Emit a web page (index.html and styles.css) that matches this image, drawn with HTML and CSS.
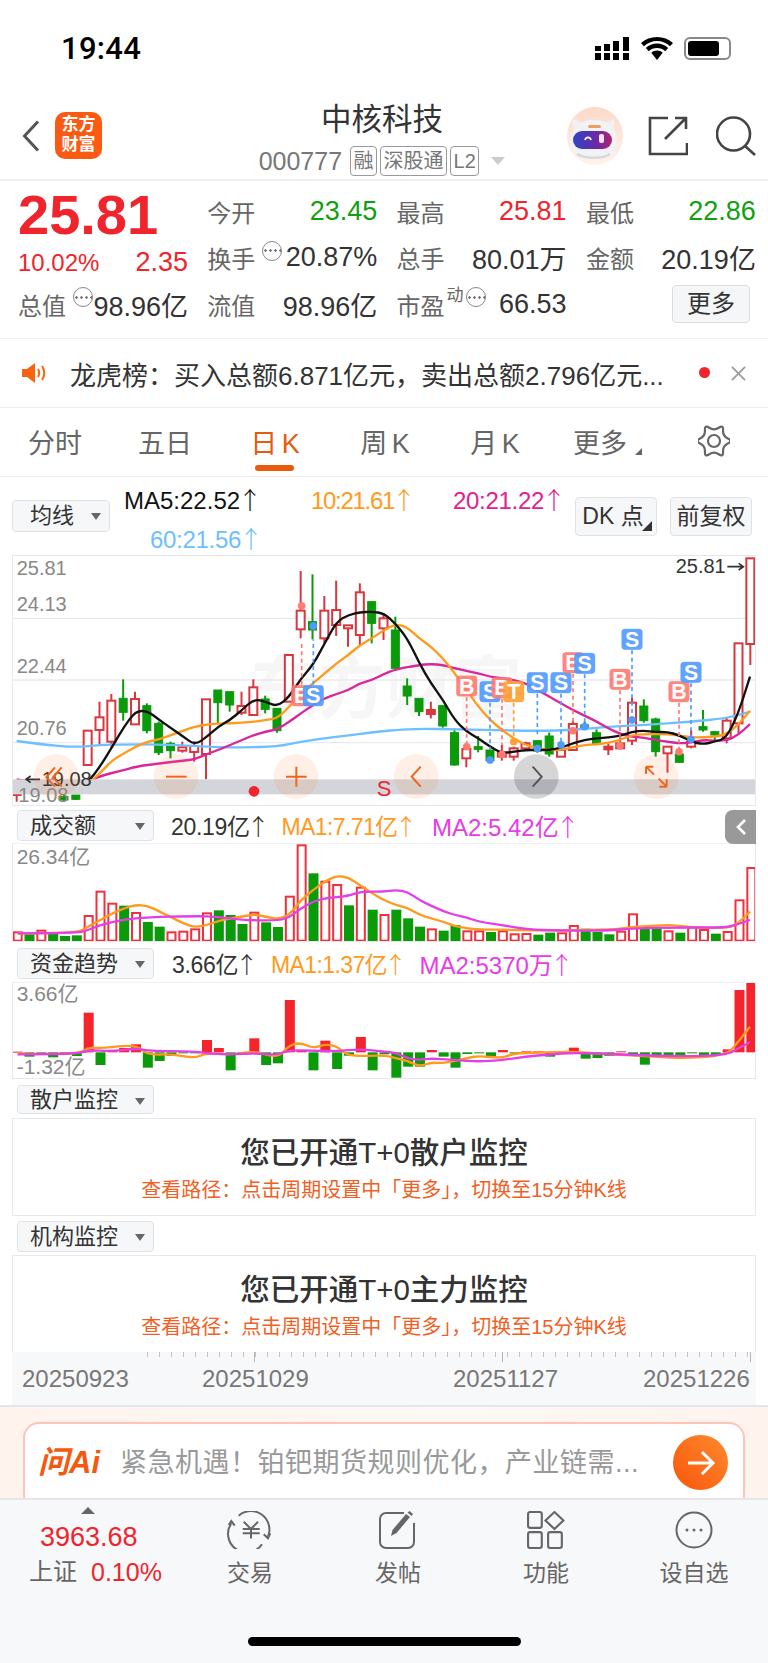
FILE: index.html
```html
<!DOCTYPE html>
<html lang="zh-CN">
<head>
    <meta charset="UTF-8">
    <meta name="viewport" content="width=device-width, initial-scale=1.0">
    <title>中核科技</title>
    <link rel="stylesheet" href="styles.css">
</head>
<body>
<div class="status">
    <span class="time">19:44</span>
    <div class="status-icons">
        <svg class="ic-signal" viewBox="0 0 35 23">
            <path d="M0 9h6v5H0zM0 16h6v7H0zM9 7h6v7H9zM9 16h6v7H9zM18 4h6v10h-6zM18 16h6v7h-6zM28 0h6v14h-6zM28 16h6v7h-6z"/>
        </svg>
        <svg class="ic-wifi" viewBox="0 0 32 23">
            <path d="M16 4c5 0 9.600 2 13 5.200L32 6C27.800 2.200 22.200 0 16 0S4.200 2.200 0 6l3 3.200C6.400 6 11 4 16 4z"/>
            <path d="M16 11c3.200 0 6 1.200 8.200 3.200l3-3.300C24.200 8.200 20.300 6.500 16 6.500S7.800 8.200 4.800 10.900l3 3.300C10 12.200 12.800 11 16 11z"/>
            <path d="M16 13.500c-2.200 0-4.200.8-5.700 2.200L16 23l5.700-7.300c-1.500-1.400-3.500-2.200-5.700-2.200z"/>
        </svg>
        <div class="battery"><i></i></div>
    </div>
</div>

<header class="nav">
    <div class="nav-left">
        <svg class="ic-back" viewBox="0 0 18 32"><path d="M16 1.500L2.500 16 16 30.500"/></svg>
        <div class="logo">东方<br>财富</div>
    </div>
    <div class="nav-mid">
        <div class="stock-name">中核科技</div>
        <div class="stock-sub">
            <span class="code">000777</span>
            <span class="tag">融</span><span class="tag">深股通</span><span class="tag">L2</span>
            <i class="tri-down"></i>
        </div>
    </div>
    <div class="nav-right">
        <svg class="ic-robot" viewBox="0 0 56 58">
            <defs>
                <linearGradient id="visor" x1="0" y1="0" x2="1" y2="0">
                    <stop offset="0" stop-color="#2f45c4"/><stop offset=".6" stop-color="#6a2aa8"/><stop offset="1" stop-color="#b0246e"/>
                </linearGradient>
                <linearGradient id="halo" x1="0" y1="0" x2="0" y2="1">
                    <stop offset="0" stop-color="#fcd9c8"/><stop offset="1" stop-color="#fff3ec"/>
                </linearGradient>
            </defs>
            <ellipse cx="28" cy="29" rx="28" ry="29" fill="url(#halo)"/>
            <path d="M5 14c0 4 1 6 3 8l6-6-6-4zM47 12c1 4 0 7-2 9l-5-6z" fill="#f1f1f3"/>
            <path d="M4 34C4 20 13 13 27 13s23 7 23 21c0 12-9 17-23 17S4 46 4 34z" fill="#f1f2f5"/>
            <rect x="21" y="18" width="13" height="3" rx="1.500" fill="#ee9f5e"/>
            <rect x="6" y="24" width="39" height="18" rx="9" fill="url(#visor)"/>
            <path d="M18 33c1-3.500 5-3.500 6 0" fill="none" stroke="#fff" stroke-width="1.600"/>
            <rect x="32" y="27" width="5" height="9" rx="2" fill="#fbe4f2"/>
            <path d="M10 47c8 5 26 5 33 0" fill="none" stroke="#d6d8dd" stroke-width="2.500"/>
        </svg>
        <svg class="ic-share" viewBox="0 0 40 40">
            <path d="M20 2H2v36h37V27M17 23L38 2M27 2h11v11"/>
        </svg>
        <svg class="ic-search" viewBox="0 0 40 40">
            <circle cx="17.500" cy="18" r="16.500"/><path d="M29 30l10 9"/>
        </svg>
    </div>
</header>

<section class="quote">
    <div class="cell"><span class="price">25.81</span></div>
    <div class="cell"><span class="lbl">今开</span><span class="val green">23.45</span></div>
    <div class="cell"><span class="lbl">最高</span><span class="val red">25.81</span></div>
    <div class="cell"><span class="lbl">最低</span><span class="val green">22.86</span></div>

    <div class="cell cell-chg"><span class="val red thin">10.02%</span><span class="val red">2.35</span></div>
    <div class="cell"><span class="lbl">换手</span><i class="hint"></i><span class="val fill">20.87%</span></div>
    <div class="cell"><span class="lbl">总手</span><span class="val">80.01万</span></div>
    <div class="cell"><span class="lbl">金额</span><span class="val">20.19亿</span></div>

    <div class="cell"><span class="lbl">总值</span><i class="hint"></i><span class="val fill">98.96亿</span></div>
    <div class="cell"><span class="lbl">流值</span><span class="val">98.96亿</span></div>
    <div class="cell"><span class="lbl">市盈</span><sup class="dyn">动</sup><i class="hint"></i><span class="val fill">66.53</span></div>
    <div class="cell cell-end"><span class="btn-more">更多</span></div>
</section>

<section class="notice">
    <svg class="ic-speaker" viewBox="0 0 26 20">
        <path d="M0 6h5l8-6v20l-8-6H0z" fill="#f9620f"/>
        <path d="M16 6c1.500 2.500 1.500 5.500 0 8M20 3c3 4 3 10 0 14" fill="none" stroke="#f9620f" stroke-width="2"/>
    </svg>
    <span class="notice-text">龙虎榜：买入总额6.871亿元，卖出总额2.796亿元...</span>
    <i class="dot-red"></i>
    <svg class="ic-close" viewBox="0 0 16 16"><path d="M1 1l14 14M15 1L1 15"/></svg>
</section>

<nav class="tabs">
    <span class="tab">分时</span>
    <span class="tab">五日</span>
    <span class="tab active">日 K</span>
    <span class="tab">周 K</span>
    <span class="tab">月 K</span>
    <span class="tab tab-more">更多</span>
    <span class="tab tab-gear">
        <svg class="ic-gear" viewBox="0 0 32 32">
            <path d="M29.830 13.500Q24.660 11 25.080 5.280Q25.500-.45 20.750 2.780Q16 6 11.250 2.780Q6.500-.45 6.920 5.280Q7.340 11 2.170 13.500Q-3 16 2.170 18.500Q7.340 21 6.920 26.720Q6.500 32.450 11.250 29.220Q16 26 20.750 29.220Q25.500 32.450 25.080 26.720Q24.660 21 29.830 18.500Q35 16 29.830 13.500Z"/>
            <circle cx="16" cy="16" r="6"/>
        </svg>
    </span>
</nav>

<section class="ma-row">
    <span class="pick pick-ma">均线</span>
    <div class="ma-list">
        <span class="c-black">MA5:22.52<b class="up">↑</b></span>
        <span class="c-orange">10:21.61<b class="up">↑</b></span>
        <span class="c-pink">20:21.22<b class="up">↑</b></span>
        <span class="c-blue">60:21.56<b class="up">↑</b></span>
    </div>
    <span class="btn-corner">DK 点</span>
    <span class="btn-plain">前复权</span>
</section>

<section class="panel panel-k">
    <svg id="kchart" class="chart-k" viewBox="39 18 2226 747">
        <text class="wm" x="750" y="490">东方财富</text>
        <path class="grid" d="M36 205H2268M36 390H2268M36 578H2268"/>
        <g id="kbody"></g>
        <text class="axis" x="50" y="76">25.81</text>
        <text class="axis" x="50" y="184">24.13</text>
        <text class="axis" x="50" y="370">22.44</text>
        <text class="axis" x="50" y="556">20.76</text>
        <rect class="band" x="36" y="688" width="2232" height="45"/>
        <text class="axis" x="55" y="757">19.08</text>
        <path class="tip-arrow" d="M120 688H78M92 678l-14 10 14 10"/>
        <text class="axis dark" x="125" y="708">19.08</text>
        <text class="axis dark" x="2027" y="70">25.81</text>
        <path class="tip-arrow" d="M2182 50H2230M2216 40l14 10-14 10"/>

        <circle class="tool" cx="168" cy="680" r="67"/>
        <path class="tool-line" d="M165 652l-26 30 26 28M185 652l-26 30 26 28"/>
        <circle class="tool" cx="528" cy="680" r="67"/>
        <path class="tool-line" d="M498 680h62"/>
        <circle class="tool" cx="888" cy="680" r="67"/>
        <path class="tool-line" d="M858 680h62M889 650v60"/>
        <circle class="tool-dot" cx="762" cy="724" r="16"/>
        <text class="mark-s" x="1130" y="737">S</text>
        <circle class="tool" cx="1249" cy="680" r="67"/>
        <path class="tool-line" d="M1262 650l-27 30 27 30"/>
        <circle class="tool tool-grey" cx="1609" cy="680" r="67"/>
        <path class="tool-line tool-line-grey" d="M1598 650l27 30-27 30"/>
        <circle class="tool" cx="1969" cy="680" r="67"/>
        <path class="tool-line" d="M1938 650h22M1938 650v22M1938 650l24 24M2000 710h-22M2000 710v-22M2000 710l-24-24"/>
    </svg>
</section>

<div class="sub-row first">
    <span class="pick">成交额</span>
    <span class="c-dark">20.19亿<b class="up">↑</b></span>
    <span class="c-orange">MA1:7.71亿<b class="up">↑</b></span>
    <span class="c-mag">MA2:5.42亿<b class="up">↑</b></span>
    <span class="handle">
        <svg viewBox="0 0 12 18"><path d="M10 2L3 9l7 7"/></svg>
    </span>
</div>
<section class="panel panel-thin">
    <svg id="volchart" class="chart-vol" viewBox="39 102 2226 291">
        <g id="volbody"></g>
        <text class="axis small" x="50" y="163">26.34亿</text>
    </svg>
</section>

<div class="sub-row second">
    <span class="pick">资金趋势</span>
    <span class="c-dark">3.66亿<b class="up">↑</b></span>
    <span class="c-orange">MA1:1.37亿<b class="up">↑</b></span>
    <span class="c-mag">MA2:5370万<b class="up">↑</b></span>
</div>
<section class="panel panel-fund">
    <svg id="fundchart" class="chart-fund" viewBox="39 519 2226 285">
        <g id="fundbody"></g>
        <text class="axis small" x="50" y="574">3.66亿</text>
        <text class="axis small" x="50" y="792">-1.32亿</text>
    </svg>
</section>

<div class="sub-row third">
    <span class="pick">散户监控</span>
</div>
<section class="monitor">
    <div class="monitor-title">您已开通T+0散户监控</div>
    <div class="monitor-tip">查看路径：点击周期设置中「更多」，切换至15分钟K线</div>
</section>

<div class="sub-row fourth">
    <span class="pick">机构监控</span>
</div>
<section class="monitor">
    <div class="monitor-title">您已开通T+0主力监控</div>
    <div class="monitor-tip">查看路径：点击周期设置中「更多」，切换至15分钟K线</div>
</section>

<section class="axis-bar">
    <div class="ticks"></div>
    <div class="dates">
        <span>20250923</span><span>20251029</span><span>20251127</span><span>20251226</span>
    </div>
</section>

<section class="ask">
    <div class="ask-box">
        <span class="ask-logo">问Ai</span>
        <span class="ask-text">紧急机遇！铂钯期货规则优化，产业链需...</span>
        <span class="ask-go">
            <svg viewBox="0 0 28 26"><path d="M1 13h25M15 2l11 11-11 11"/></svg>
        </span>
    </div>
</section>

<footer class="bottom">
    <div class="bottom-index">
        <i class="tri-up"></i>
        <span class="index-num">3963.68</span>
        <div class="index-line"><span>上证</span><span class="red">0.10%</span></div>
    </div>
    <div class="bottom-item">
        <svg class="ic-foot" viewBox="-2 0 46 38">
            <path d="M9.700 4.700A18.500 18.500 0 0 1 39 25.700M34.700 23.300l4.300 4 2.300-5M33 33.300A18.500 18.500 0 0 1 2.300 12.300M-.3 14l2.600-4 3.400 4.700"/>
            <path d="M14.700 10.700L22 18l7-7.300M13.700 18h17M13.700 22.300h17M22 18v9.500"/>
        </svg>
        <span>交易</span>
    </div>
    <div class="bottom-item">
        <svg class="ic-foot" viewBox="0 0 40 38">
            <path d="M26 2H8a6 6 0 0 0-6 6v23a6 6 0 0 0 6 6h22a6 6 0 0 0 6-6V12"/>
            <path class="solid" d="M13 25l1.500-6L28 3l4 3-13.500 16z"/>
            <path class="solid" d="M29.500 1.500l2-1.500 3.500 3-1.500 2z"/>
        </svg>
        <span>发帖</span>
    </div>
    <div class="bottom-item">
        <svg class="ic-foot" viewBox="0 0 36 36">
            <rect x="1" y="1" width="13" height="15" rx="2"/>
            <path d="M26 1l8.500 8-8.500 8-8.500-8z"/>
            <rect x="1" y="20" width="13" height="15" rx="2"/>
            <rect x="20" y="20" width="13" height="15" rx="2"/>
        </svg>
        <span>功能</span>
    </div>
    <div class="bottom-item">
        <svg class="ic-foot" viewBox="0 0 38 38">
            <circle cx="19" cy="19" r="17.500"/>
            <circle class="solid" cx="12" cy="19" r="1.500"/>
            <circle class="solid" cx="19" cy="19" r="1.500"/>
            <circle class="solid" cx="26" cy="19" r="1.500"/>
        </svg>
        <span>设自选</span>
    </div>
    <div class="home-bar"></div>
</footer>
<script src="chart.js"></script>
</body>
</html>
```

FILE: styles.css
```css
* {
    box-sizing: border-box;
}
body {
    margin: 0;
    width: 768px;
    height: 1663px;
    overflow: hidden;
    background: #fff;
    color: #333;
    font-family: "Liberation Sans", "Noto Sans CJK SC", sans-serif;
}
i {
    display: block;
}
svg {
    display: block;
}
.red { color: #f0242c; }
.green { color: #12a012; }
.c-black { color: #111; }
.c-dark { color: #333; }
.c-orange { color: #ff9a1c; }
.c-pink { color: #e3208f; }
.c-blue { color: #6cc0ff; }
.c-mag { color: #e83be8; }
.up {
    font-family: "Noto Sans CJK SC", sans-serif;
    font-weight: 300;
}

/* status bar */
.status {
    height: 88px;
    display: flex;
    justify-content: space-between;
    padding: 33px 37px 0 61px;
}
.time {
    font-size: 31px;
    line-height: 32px;
    font-family: "Roboto", sans-serif;
    font-weight: 500;
    color: #000;
    letter-spacing: .3px;
}
.status-icons {
    display: flex;
    gap: 11px;
    height: 23px;
    margin-top: 4px;
}
.ic-signal { width: 35px; height: 23px; }
.ic-wifi { width: 32px; height: 23px; }
.battery {
    width: 47px;
    height: 23px;
    border: 2px solid #888;
    border-radius: 6px;
    padding: 2px;
}
.battery i {
    width: 31px;
    height: 15px;
    background: #000;
    border-radius: 3px;
}

/* header */
.nav {
    height: 93px;
    display: grid;
    grid-template-columns: 1fr auto 1fr;
    border-bottom: 2px solid #eee;
}
.nav-left {
    display: flex;
    align-items: flex-start;
    padding: 24px 0 0 22px;
}
.ic-back {
    width: 18px;
    height: 32px;
    margin-top: 8px;
    fill: none;
    stroke: #555;
    stroke-width: 3;
}
.logo {
    width: 47px;
    height: 47px;
    margin-left: 15px;
    border-radius: 10px;
    background: #fb5a12;
    color: #fff;
    font-size: 17px;
    line-height: 20px;
    font-weight: 700;
    text-align: center;
    padding-top: 3px;
}
.nav-mid {
    text-align: center;
    padding-right: 4px;
}
.stock-name {
    font-size: 30.500px;
    line-height: 40px;
    margin-top: 11px;
    color: #333;
}
.stock-sub {
    display: flex;
    align-items: center;
    gap: 3px;
    margin-top: 7px;
}
.code {
    font-size: 25px;
    color: #777;
    margin-right: 5px;
}
.tag {
    height: 30px;
    line-height: 28px;
    padding: 0 2.500px;
    border: 1px solid #999;
    border-radius: 4px;
    font-size: 20px;
    color: #777;
}
.tri-down {
    width: 0;
    height: 0;
    margin-left: 9px;
    border: 7px solid transparent;
    border-top: 8px solid #ccc;
    border-bottom: 0;
}
.nav-right {
    display: flex;
    justify-content: flex-end;
    align-items: flex-start;
    padding: 19px 12px 0 0;
}
.ic-robot { width: 56px; height: 58px; }
.ic-share, .ic-search {
    width: 40px;
    height: 40px;
    margin-top: 9px;
    fill: none;
    stroke: #444;
    stroke-width: 2.600;
}
.ic-share { margin-left: 25px; }
.ic-search { margin-left: 28px; }

/* quote */
.quote {
    height: 158px;
    padding: 7px 13px 0 18px;
    display: grid;
    grid-template-columns: repeat(4, 170px);
    grid-template-rows: repeat(3, 46.500px);
    column-gap: 19.300px;
    border-bottom: 1px solid #eee;
}
.cell {
    display: flex;
    align-items: center;
    justify-content: space-between;
    white-space: nowrap;
}
.cell-chg { padding-top: 10px; }
.cell-end {
    justify-content: flex-end;
    padding-right: 6px;
}
.price {
    font-size: 56px;
    font-weight: 700;
    line-height: 47px;
    margin-top: 7px;
    color: #f0242c;
}
.lbl {
    font-size: 24px;
    color: #666;
}
.val {
    font-size: 27px;
    color: #333;
}
.val.red { color: #f0242c; }
.val.green { color: #12a012; }
.val.thin { font-size: 24px; }
.val.fill { margin-left: auto; }
.hint {
    width: 20px;
    height: 20px;
    border: 1.500px solid #888;
    border-radius: 50%;
    margin: -14px 0 0 7px;
    flex-shrink: 0;
    background: radial-gradient(circle, #777 1px, transparent 1.500px) 0 center / 5px 5px repeat-x;
}
.dyn {
    font-size: 17px;
    color: #666;
    margin: -16px 0 0 2px;
    line-height: 20px;
}
.dyn + .hint { margin-left: 2px; }
.btn-more {
    width: 78px;
    height: 38px;
    line-height: 36px;
    text-align: center;
    font-size: 24px;
    background: #f5f6f8;
    border: 1px solid #ddd;
    border-radius: 4px;
}

/* notice */
.notice {
    height: 69px;
    display: flex;
    align-items: center;
    padding-left: 22px;
    border-bottom: 1px solid #eee;
}
.ic-speaker { width: 26px; height: 20px; flex-shrink: 0; }
.notice-text {
    flex-shrink: 0;
    margin-left: 22px;
    font-size: 26px;
    color: #333;
    white-space: nowrap;
    width: 600px;
}
.dot-red {
    width: 11px;
    height: 11px;
    flex-shrink: 0;
    border-radius: 50%;
    background: #f0242c;
    margin: -2px 0 0 29px;
}
.ic-close {
    width: 15px;
    height: 15px;
    flex-shrink: 0;
    margin-left: 21px;
    stroke: #999;
    stroke-width: 1.800;
    fill: none;
}

/* tabs */
.tabs {
    height: 69px;
    display: grid;
    grid-template-columns: repeat(5, 110px) 100px 1fr;
    align-items: center;
    border-bottom: 1px solid #eee;
}
.tab {
    position: relative;
    font-size: 27px;
    color: #666;
    word-spacing: -3px;
    display: flex;
    justify-content: center;
    align-items: center;
    height: 68px;
    margin-top: -2px;
}
.tab.active { color: #e85a0c; }
.tab.active::after {
    content: "";
    position: absolute;
    left: 35px;
    bottom: 4px;
    width: 39px;
    height: 6px;
    border-radius: 3px;
    background: #e85a0c;
}
.tab-more::after {
    content: "";
    position: absolute;
    right: 8px;
    bottom: 20px;
    border-left: 7px solid transparent;
    border-bottom: 7px solid #666;
}
.tab-gear { padding-left: 10px; }
.ic-gear {
    width: 32px;
    height: 32px;
    fill: none;
    stroke: #666;
    stroke-width: 2.200;
}

/* ma row */
.ma-row {
    height: 78px;
    display: flex;
    align-items: flex-start;
    padding-left: 12px;
}
.pick {
    position: relative;
    display: block;
    flex-shrink: 0;
    width: 137px;
    height: 31px;
    line-height: 29px;
    padding-left: 12px;
    font-size: 22px;
    color: #333;
    background: #f6f7f9;
    border: 1px solid #e0e2e6;
    border-radius: 4px;
    white-space: nowrap;
}
.pick::after {
    content: "";
    position: absolute;
    right: 8px;
    top: 12px;
    border: 5px solid transparent;
    border-top: 7px solid #666;
    border-bottom: 0;
}
.pick-ma {
    width: 98px;
    height: 32px;
    margin-top: 23px;
    padding-left: 17px;
}
.ma-list {
    width: 450px;
    margin-left: 14px;
    display: grid;
    grid-template-columns: 187px 142px 1fr;
    grid-auto-rows: 39px;
    padding-top: 2px;
    font-size: 24px;
    line-height: 39px;
    white-space: nowrap;
}
.ma-list .up { margin-left: -2px; }
.ma-list .c-orange { letter-spacing: -1.300px; }
.ma-list .c-pink { letter-spacing: -.3px; }
.ma-list .c-blue {
    grid-column: 1 / 2;
    padding-left: 26px;
    letter-spacing: -.3px;
}
.btn-corner, .btn-plain {
    position: relative;
    width: 82px;
    height: 39px;
    line-height: 37px;
    margin-top: 20px;
    text-align: center;
    font-size: 23px;
    background: #f6f7f9;
    border: 1px solid #e0e2e6;
    border-radius: 4px;
    white-space: nowrap;
}
.btn-corner {
    margin-left: 1px;
    padding-right: 6px;
}
.btn-plain { margin-left: 13px; }
.btn-corner::after {
    content: "";
    position: absolute;
    right: 4px;
    bottom: 4px;
    border-left: 10px solid transparent;
    border-bottom: 10px solid #333;
}

/* charts */
.panel {
    margin: 0 12px;
    border-left: 1px solid #e6e8ee;
    border-right: 1px solid #e6e8ee;
    border-bottom: 1px solid #e6e8ee;
}
.panel-k {
    height: 251px;
    border-top: 1px solid #e4e6ec;
}
.panel-thin {
    height: 99px;
    border-top: 1px solid #eef0f4;
}
.panel-fund {
    height: 97px;
    border-top: 1px solid #eef0f4;
}
.chart-k { width: 742px; height: 249px; }
.chart-vol { width: 742px; height: 97px; }
.chart-fund { width: 742px; height: 95px; }
.grid {
    stroke: #e8eaf2;
    stroke-width: 4;
    fill: none;
}
.wm {
    font-size: 204px;
    font-weight: 700;
    fill: #f6f6f6;
}
.axis {
    font-size: 60px;
    fill: #888;
}
.axis.small { font-size: 63px; }
.axis.dark { fill: #333; }
.tip-arrow {
    fill: none;
    stroke: #333;
    stroke-width: 5;
}
.band { fill: #d3d5da; }
.tool { fill: rgba(255, 120, 50, .12); }
.tool-grey { fill: rgba(0, 0, 0, .16); }
.tool-line {
    fill: none;
    stroke: #f0661c;
    stroke-width: 6;
}
.tool-line-grey { stroke: #555; }
.tool-dot { fill: #f0242c; }
.mark-s {
    font-size: 66px;
    fill: #f0242c;
}
.wick-r { stroke: #d9363e; stroke-width: 6; }
.wick-g { stroke: #0a9a0a; stroke-width: 6; }
.body-r { fill: #fff; stroke: #d9363e; stroke-width: 6; }
.body-rs { fill: #d9363e; stroke: #d9363e; stroke-width: 6; }
.body-g { fill: #0a9a0a; stroke: #0a9a0a; stroke-width: 3; }
.ln { fill: none; stroke-linejoin: round; }
.ln-k { stroke: #111; stroke-width: 7; }
.ln-o { stroke: #ff9a1c; stroke-width: 7; }
.ln-m { stroke: #d9269c; stroke-width: 7; }
.ln-b { stroke: #6cc0ff; stroke-width: 7; }
.ln-v { stroke: #e23fe8; stroke-width: 7; }
.dash { stroke-width: 5; stroke-dasharray: 12 10; fill: none; }
.mk-S { fill: #4f9bff; stroke: #4f9bff; }
.mk-B { fill: #ff7a70; stroke: #ff7a70; }
.mk-T { fill: #ffa033; stroke: #ffa033; }
.mk-txt {
    font-size: 64px;
    font-weight: 700;
    fill: #fff;
    text-anchor: middle;
}
.bar-h { fill: #fff; stroke: #f0303a; stroke-width: 6; }
.bar-g { fill: #0a9a0a; }
.bar-r { fill: #f5242a; }

/* rows between charts */
.sub-row {
    position: relative;
    display: flex;
    gap: 12px;
    align-items: flex-start;
    padding-left: 17px;
    font-size: 23px;
    line-height: 31px;
    white-space: nowrap;
}
.sub-row .up { margin-left: -3px; }
.sub-row .c-dark { margin-left: 5px; letter-spacing: -.3px; }
.sub-row .c-orange { letter-spacing: -.6px; }
.sub-row .c-mag { font-size: 24px; }
.first { height: 37px; padding-top: 4px; }
.first .c-mag { margin-left: 3px; }
.second { height: 40px; padding-top: 6px; gap: 13px; }
.third { height: 39px; padding-top: 6px; }
.fourth { height: 39px; padding-top: 5px; }
.third .pick { height: 29px; line-height: 27px; }
.handle {
    position: absolute;
    right: 12px;
    top: 4px;
    width: 31px;
    height: 34px;
    background: #999;
    border-radius: 8px 0 0 8px;
    padding: 8px 0 0 10px;
}
.handle svg {
    width: 12px;
    height: 18px;
    fill: none;
    stroke: #fff;
    stroke-width: 2.600;
}
.monitor {
    margin: 0 12px;
    height: 98px;
    border: 1px solid #e6e8ee;
    text-align: center;
}
.monitor-title {
    font-size: 29.500px;
    font-weight: 500;
    line-height: 40px;
    margin-top: 14px;
    color: #333;
}
.monitor-tip {
    font-size: 20px;
    line-height: 28px;
    margin-top: 3px;
    color: #f1601f;
}

/* time axis */
.axis-bar {
    margin: -1px 12px 0;
    height: 53px;
    background: #f7f8fa;
    position: relative;
}
.ticks {
    height: 10px;
    margin-left: 135px;
    width: 604px;
    background:
        linear-gradient(#b5b5b5, #b5b5b5) 107px 0 / 1px 10px no-repeat,
        linear-gradient(#b5b5b5, #b5b5b5) 355px 0 / 1px 10px no-repeat,
        linear-gradient(#b5b5b5, #b5b5b5) 603px 0 / 1px 10px no-repeat,
        repeating-linear-gradient(90deg, #c4c4c4 0 1px, transparent 1px 12px) 0 0 / 100% 5px no-repeat;
}
.dates {
    display: flex;
    margin-top: 3px;
    font-size: 24px;
    line-height: 28px;
    color: #777;
}
.dates span:nth-child(1) { margin-left: 10px; width: 180px; }
.dates span:nth-child(2) { width: 251px; }
.dates span:nth-child(3) { width: 190px; }

/* ask ai */
.ask {
    height: 93px;
    padding: 15px 23px 0;
    border-top: 2px solid #e4e6ea;
    background: linear-gradient(90deg, #fff3ee, #fff8f5 60%, #fff3ee);
    overflow: hidden;
}
.ask-box {
    height: 90px;
    display: flex;
    align-items: flex-start;
    padding: 21px 0 0 13px;
    background: #fff;
    border: 2px solid #ffc4b8;
    border-radius: 16px;
}
.ask-logo {
    flex-shrink: 0;
    width: 63px;
    font-size: 31px;
    line-height: 36px;
    font-weight: 700;
    font-style: italic;
    color: #f5590f;
    white-space: nowrap;
}
.ask-text {
    flex-shrink: 0;
    width: 553px;
    margin-left: 19px;
    font-size: 27px;
    letter-spacing: .5px;
    line-height: 36px;
    color: #999;
    white-space: nowrap;
}
.ask-go {
    flex-shrink: 0;
    width: 55px;
    height: 55px;
    margin-top: -10px;
    border-radius: 50%;
    background: linear-gradient(45deg, #f8560a, #ff8a2e);
    padding: 15px 0 0 14px;
}
.ask-go svg {
    width: 28px;
    height: 26px;
    fill: none;
    stroke: #fff;
    stroke-width: 3;
}

/* bottom bar */
.bottom {
    position: relative;
    height: 165px;
    display: grid;
    grid-template-columns: 176px repeat(4, 148px);
    background: #f7f8fa;
    border-top: 2px solid #e4e6ea;
}
.bottom-index {
    padding: 7px 0 0 29px;
    font-size: 24px;
    color: #666;
}
.tri-up {
    width: 0;
    height: 0;
    margin-left: 52px;
    border: 7px solid transparent;
    border-bottom: 7px solid #666;
    border-top: 0;
}
.index-num {
    display: block;
    margin: 8px 0 0 11px;
    font-size: 27px;
    line-height: 30px;
    color: #f0242c;
}
.index-line {
    display: flex;
    gap: 14px;
    margin-top: 3px;
    line-height: 34px;
}
.index-line .red { font-size: 25px; }
.bottom-item {
    display: flex;
    flex-direction: column;
    align-items: center;
    padding-top: 11px;
    font-size: 23px;
    color: #666;
}
.ic-foot {
    height: 38px;
    width: auto;
    margin-bottom: 5px;
    fill: none;
    stroke: #666;
    stroke-width: 2;
}
.ic-foot .solid { fill: #666; stroke: none; }
.home-bar {
    position: absolute;
    left: 248px;
    bottom: 17px;
    width: 273px;
    height: 9px;
    border-radius: 5px;
    background: #000;
}
```

FILE: chart.js
```js
// data below is read in 3x chart units, the viewBox of each svg uses the same numbers
var STEP = 35.5;
var OFF = 1152;

function xOf(i) {
    return 50 + STEP * i;
}

// type, bodyTop, bodyBottom, wickTop, wickBottom
var candles = [
    ["r",705,735,700,755],["g",700,720,700,725],["r",695,715,690,722],["r",690,720,685,725],
    ["g",740,750,735,752],["g",735,748,735,750],["r",542,645,542,645],["r",502,540,455,585],
    ["r",452,575,432,590],["g",445,487,388,512],["r",447,523,425,525],["g",467,542,460,550],
    ["g",520,608,515,615],["g",580,602,575,625],["r",592,602,575,608],["r",588,606,575,635],
    ["r",448,612,448,688],["g",420,458,420,522],["g",425,465,425,485],["r",468,488,425,495],
    ["r",412,495,388,495],["g",447,478,437,490],["g",475,542,475,548],["r",315,455,315,455],
    ["r",182,238,63,265],["g",215,240,73,268],["r",182,265,138,280],["r",180,225,92,258],
    ["r",226,235,226,290],["r",127,255,100,285],["g",155,220,155,280],["r",205,235,190,270],
    ["g",240,355,200,355],["g",408,438,385,465],["g",445,485,445,498],["s",480,492,455,505],
    ["g",467,528,467,533],["g",548,645,535,647],["r",597,625,582,652],["g",590,598,558,607],
    ["g",600,632,600,640],["s",607,620,585,632],["r",595,620,590,632],["r",580,595,575,600],
    ["g",572,603,572,608],["g",558,612,548,620],["r",600,620,590,620],["r",522,600,512,600],
    ["g",525,533,515,540],["g",548,582,538,582],["s",590,598,580,615],["s",580,595,560,598],
    ["r",458,572,442,585],["g",468,512,448,518],["g",507,605,503,620],["r",590,610,590,668],
    ["g",612,637,597,637],["r",575,590,540,595],["g",530,540,480,545],["g",545,555,545,570],
    ["r",512,565,503,580],["r",280,520,280,550],["r",25,282,282,345]
];

var kLines = {
    "ln-b": [[50,573,120,583,230,592,300,585,372,583,478,583,585,588,655,592,726,592,832,590,903,575,1010,560,1152,543],
             [35,540,106,536,212,538,318,540,460,543,567,540,673,530,780,525,921,515,1027,505,1098,485]],
    "ln-m": [[50,688,120,700,230,718,265,695,300,678,372,660,407,650,478,640,550,632,585,628,621,612,655,600,726,570,762,555,797,545,832,538,868,515,903,490,939,465,974,445,1010,432,1045,420,1080,400,1116,390,1152,372],
             [35,358,106,345,141,342,177,345,212,355,283,370,318,380,354,385,389,390,425,400,460,420,496,440,531,460,567,480,602,497,638,515,673,535,708,552,744,560,780,563,815,570,850,575,885,580,921,578,957,570,992,572,1027,572,1063,555,1098,522]],
    "ln-o": [[50,708,120,715,230,722,265,700,300,670,337,630,372,610,407,590,443,575,478,568,514,555,550,542,585,530,621,523,655,520,690,520,726,518,762,515,797,510,832,505,868,470,903,430,939,400,974,370,1010,340,1045,315,1080,285,1116,265,1152,240],
             [35,222,70,232,106,265,141,290,177,325,212,370,248,420,283,470,318,510,354,540,389,565,425,585,460,595,496,600,531,600,567,592,602,585,638,583,673,578,708,570,744,555,780,553,815,552,850,553,885,556,921,562,957,562,992,560,1027,553,1063,525,1098,482]],
    "ln-k": [[50,718,160,715,230,718,265,695,300,650,337,590,372,530,407,483,443,483,478,510,514,535,550,560,585,585,621,560,655,530,690,510,726,480,762,447,797,455,832,470,868,440,903,385,939,345,974,280,1010,215,1045,195,1080,187,1116,185,1152,190],
             [35,222,70,265,106,340,141,400,177,450,212,510,248,545,283,565,318,590,354,610,389,605,425,600,460,600,496,600,531,593,567,580,602,570,638,565,673,562,708,558,744,545,780,542,815,546,850,546,885,555,921,575,957,583,992,575,1027,565,1063,490,1098,380]]
};

// letter, x, y, dash end, dot y
var marks = [
    ["B",905,437,280,168],["S",940,437,268,228],
    ["B",1400,408,582,590],["S",1470,425,600,630],["B",1506,413,585,613],["T",1541,425,570,575],
    ["S",1612,398,555,595],["S",1683,398,580,585],["B",1719,338,520,542],["S",1754,340,525,530],
    ["B",1860,388,580,587],["S",1896,268,500,510],["B",2037,425,595,605],["S",2073,367,565,568]
];

var vol = ["h367","g373","h362","g372","g378","g376","h318","h245","h281","g287","h309","g336","g350","h367","h365","h358","h310","g301","g315","g342","h308","g337","g351","h260","h106","g190","h215","h225","g286","h233","g299","h315",
    "g299","g325","g350","h358","g362","g345","h364","h364","g366","h364","h373","h372","g374","g368","h370","h348","g356","g366","g373","h365","h313","g357","g355","h364","g368","h352","h360","g371","h366","h271","h174"];

var volLines = {
    "ln-o": [[53,370,230,370,265,350,301,330,337,310,372,295,407,285,443,287,479,305,514,322,550,340,585,352,621,345,656,333,691,325,726,320,762,313,797,320,832,328,868,315,903,270,939,240,974,215,1010,197,1045,202,1080,225,1116,250,1152,270],
             [35,285,70,293,106,315,141,325,177,335,212,348,248,355,283,358,389,360,531,362,708,358,744,350,850,345,885,347,921,352,1027,355,1063,340,1098,305]],
    "ln-v": [[53,370,230,370,265,360,301,345,372,328,443,322,585,318,656,320,726,330,832,332,868,322,903,295,939,275,974,265,1045,258,1080,245,1152,245],
             [35,240,70,245,106,270,141,287,177,303,212,315,248,322,283,335,354,345,425,358,531,362,673,362,744,355,885,352,1027,353,1063,342,1098,330]]
};

var fund = [725,740,727,742,735,738,608,765,720,714,703,773,753,738,730,728,690,714,781,733,685,765,760,570,722,781,692,777,737,681,781,733,
    803,770,770,720,740,773,732,730,740,720,730,724,724,740,724,713,746,744,738,724,733,764,740,740,746,730,738,735,718,540,518];

var fundLines = {
    "ln-o": [[53,730,230,735,265,712,301,715,407,703,443,735,514,732,585,745,621,728,691,735,762,722,832,745,868,705,903,698,939,715,974,703,1010,708,1045,740,1152,735],
             [35,745,70,752,106,770,141,757,177,760,248,745,283,737,354,745,389,730,460,728,567,725,673,733,780,738,885,745,1027,737,1063,695,1098,650]],
    "ln-v": [[53,733,230,733,265,720,337,724,407,715,443,723,585,724,621,730,691,733,762,730,832,735,868,720,939,722,1010,724,1080,717,1152,725],
             [35,728,70,745,106,750,141,745,212,750,283,755,354,750,425,740,496,733,567,728,708,733,885,740,1027,735,1063,715,1098,697]]
};

// the two halves of a line were read separately, join them
function smooth(parts) {
    var pts = [], i;
    for (i = 0; i < parts[0].length; i += 2) pts.push([parts[0][i], parts[0][i + 1]]);
    for (i = 0; i < parts[1].length; i += 2) pts.push([parts[1][i] + OFF, parts[1][i + 1]]);
    var d = "M" + pts[0][0] + " " + pts[0][1];
    for (i = 1; i < pts.length - 1; i++) {
        var mx = (pts[i][0] + pts[i + 1][0]) / 2;
        var my = (pts[i][1] + pts[i + 1][1]) / 2;
        d += "Q" + pts[i][0] + " " + pts[i][1] + " " + mx + " " + my;
    }
    d += "L" + pts[pts.length - 1][0] + " " + pts[pts.length - 1][1];
    return d;
}

function linesSvg(set) {
    var s = "";
    Object.keys(set).forEach(function (k) {
        s += '<path class="ln ' + k + '" d="' + smooth(set[k]) + '"/>';
    });
    return s;
}

function drawK() {
    var s = "";
    candles.forEach(function (c, i) {
        var x = xOf(i);
        var wick = c[0] == "g" ? "wick-g" : "wick-r";
        var body = c[0] == "g" ? "body-g" : c[0] == "s" ? "body-rs" : "body-r";
        s += '<path class="' + wick + '" d="M' + x + " " + c[3] + "V" + c[4] + '"/>';
        s += '<rect class="' + body + '" x="' + (x - 12) + '" y="' + c[1] + '" width="24" height="' + (c[2] - c[1]) + '"/>';
    });
    s += linesSvg(kLines);
    marks.forEach(function (m) {
        var top = m[3] > m[2];
        var y1 = top ? m[2] + 33 : m[2] - 33;
        s += '<path class="dash mk-' + m[0] + '" d="M' + m[1] + " " + y1 + "V" + m[3] + '"/>';
        s += '<circle class="mk-' + m[0] + '" cx="' + m[1] + '" cy="' + m[4] + '" r="11"/>';
    });
    marks.forEach(function (m) {
        s += '<rect class="mk-' + m[0] + '" x="' + (m[1] - 31) + '" y="' + (m[2] - 31) + '" width="62" height="62" rx="10" opacity=".9"/>';
        s += '<text class="mk-txt" x="' + m[1] + '" y="' + (m[2] + 23) + '">' + m[0] + "</text>";
    });
    document.getElementById("kbody").innerHTML = s;
}

function drawVol() {
    var s = "";
    vol.forEach(function (v, i) {
        var x = 53 + STEP * i;
        var top = +v.slice(1);
        if (v[0] == "h") {
            s += '<rect class="bar-h" x="' + (x - 12) + '" y="' + top + '" width="24" height="' + (392 - top) + '"/>';
        } else {
            s += '<rect class="bar-g" x="' + (x - 15) + '" y="' + top + '" width="30" height="' + (395 - top) + '"/>';
        }
    });
    s += linesSvg(volLines);
    document.getElementById("volbody").innerHTML = s;
}

function drawFund() {
    var s = "", zero = 727;
    fund.forEach(function (v, i) {
        var x = 53 + STEP * i;
        var y = Math.min(v, zero), h = Math.max(Math.abs(v - zero), 3);
        s += '<rect class="' + (v < zero ? "bar-r" : "bar-g") + '" x="' + (x - 15) + '" y="' + y + '" width="30" height="' + h + '"/>';
    });
    s += linesSvg(fundLines);
    document.getElementById("fundbody").innerHTML = s;
}

drawK();
drawVol();
drawFund();
```
